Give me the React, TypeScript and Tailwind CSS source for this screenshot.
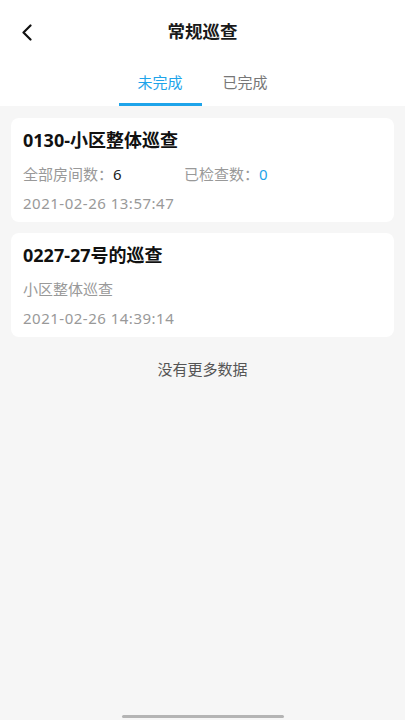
import { useState } from "react";

const font = { fontFamily: '"Noto Sans", "Noto Sans CJK SC", sans-serif' };

type Item = {
  title: string;
  sub?: string;
  total?: number;
  checked?: number;
  time: string;
};

const items: Item[] = [
  { title: "0130-小区整体巡查", total: 6, checked: 0, time: "2021-02-26 13:57:47" },
  { title: "0227-27号的巡查", sub: "小区整体巡查", time: "2021-02-26 14:39:14" },
];

export default function App() {
  const [tab, setTab] = useState("未完成");
  return (
    <div className="w-[405px] h-[720px] bg-[#f6f6f6] flex flex-col relative overflow-hidden" style={font}>
      {/* Header */}
      <header className="bg-white">
        <div className="h-[64px] flex items-center relative">
          <button className="absolute left-[16px] top-[20px] w-[20px] h-[24px] flex items-center justify-center" aria-label="返回">
            <svg width="11" height="17" viewBox="0 0 11 17" fill="none">
              <path d="M9.5 1.5L2.5 8.5L9.5 15.5" stroke="#111" strokeWidth="2.2" strokeLinecap="round" strokeLinejoin="round" />
            </svg>
          </button>
          <h1 className="flex-1 text-center text-[17.5px] font-bold text-[#1a1a1a] leading-none">常规巡查</h1>
        </div>
        <div className="flex justify-center gap-[2px] h-[42px]">
          {["未完成", "已完成"].map((t) => {
            const active = tab === t;
            return (
              <button
                key={t}
                onClick={() => setTab(t)}
                className="w-[83px] h-full flex flex-col items-center justify-between"
              >
                <span className={`mt-[7px] text-[15px] leading-[22px] ${active ? "text-[#1ea4ea]" : "text-[#777]"}`}>{t}</span>
                <span className={`w-full h-[3px] ${active ? "bg-[#1ea4ea]" : "bg-transparent"}`} />
              </button>
            );
          })}
        </div>
      </header>

      {/* List */}
      <main className="flex flex-col gap-[11px] px-[11px] pt-[12px]">
        {items.map((it) => (
          <div key={it.title} className="bg-white rounded-[8px] px-[12px] pt-[9px] pb-[8px]">
            <div className="text-[18px] font-bold text-[#111] leading-[26px]">{it.title}</div>
            {it.sub ? (
              <div className="mt-[10px] text-[15px] text-[#999] leading-[22px]">{it.sub}</div>
            ) : (
              <div className="mt-[10px] flex text-[15px] leading-[22px]">
                <span className="w-[161px] text-[#999]">
                  全部房间数：<span className="text-[#222]">{it.total}</span>
                </span>
                <span className="text-[#999]">
                  已检查数：<span className="text-[#1ea4ea]">{it.checked}</span>
                </span>
              </div>
            )}
            <div className="mt-[7px] text-[15px] text-[#999] leading-[22px] tracking-[0.5px]">{it.time}</div>
          </div>
        ))}
        <div className="mt-[10px] text-center text-[15px] text-[#555] leading-[22px]">没有更多数据</div>
      </main>

      {/* Home indicator */}
      <div className="mt-auto mb-[2px] flex justify-center">
        <div className="w-[162px] h-[3px] rounded-full bg-[#b4b4b4]" />
      </div>
    </div>
  );
}
